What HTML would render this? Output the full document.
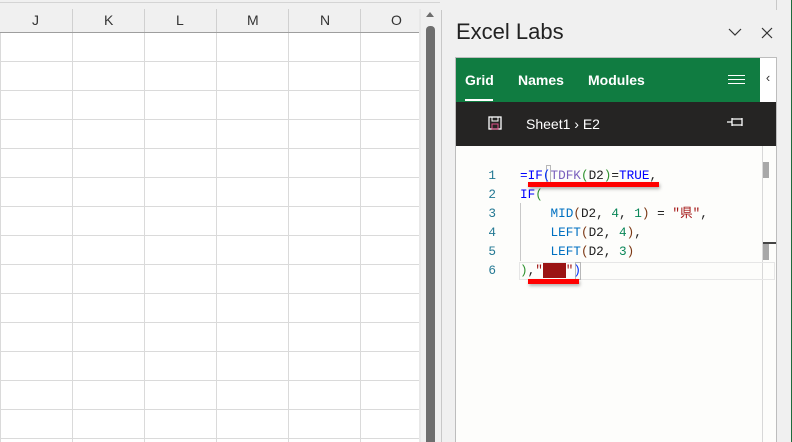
<!DOCTYPE html>
<html><head><style>
*{margin:0;padding:0;box-sizing:border-box}
body{width:792px;height:442px;overflow:hidden;background:#f0f0f0;position:relative;font-family:"Liberation Sans",sans-serif}
.a{position:absolute}
.mono{font-family:"Liberation Mono","Noto Sans CJK JP",monospace;font-size:12.7px;white-space:pre;line-height:19px}
</style></head><body>
<!-- grid -->
<div class="a" style="left:0;top:2px;width:440px;height:1px;background:#d4d4d4"></div>
<div class="a" style="left:0;top:9px;width:419px;height:24px;background:#f0f0f0;border-bottom:1px solid #9e9e9e"></div>
<div class="a" style="left:0;top:33px;width:419px;height:409px;background:#fff;
background-image:linear-gradient(#dadada 1px,transparent 1px),linear-gradient(90deg,#dadada 1px,transparent 1px);
background-size:72px 29px;background-position:0 28px,72px 0"></div>
<div class="a" style="left:0;top:9px;width:419px;height:23px;font-size:14px;color:#333">
<span class="a" style="left:32px;top:3px">J</span>
<span class="a" style="left:104px;top:3px">K</span>
<span class="a" style="left:176px;top:3px">L</span>
<span class="a" style="left:247px;top:3px">M</span>
<span class="a" style="left:320px;top:3px">N</span>
<span class="a" style="left:391px;top:3px">O</span>
<span class="a" style="left:72px;top:0;width:1px;height:23px;background:#d0d0d0"></span>
<span class="a" style="left:144px;top:0;width:1px;height:23px;background:#d0d0d0"></span>
<span class="a" style="left:216px;top:0;width:1px;height:23px;background:#d0d0d0"></span>
<span class="a" style="left:288px;top:0;width:1px;height:23px;background:#d0d0d0"></span>
<span class="a" style="left:360px;top:0;width:1px;height:23px;background:#d0d0d0"></span>
</div>
<div class="a" style="left:419px;top:9px;width:2px;height:433px;background:#e8e8e8"></div>
<div class="a" style="left:426px;top:12px;width:0;height:0;border-left:4px solid transparent;border-right:4px solid transparent;border-bottom:5px solid #6e6e6e"></div>
<div class="a" style="left:426px;top:26px;width:9px;height:416px;background:#6e6e6e;border-radius:4px 4px 0 0"></div>
<div class="a" style="left:441px;top:10px;width:1px;height:432px;background:#c8c8c8"></div>
<!-- pane -->
<div class="a" style="left:456px;top:19px;font-size:22px;color:#222">Excel Labs</div>
<svg class="a" style="left:728px;top:28px" width="14" height="9"><path d="M1 1 L7 7 L13 1" fill="none" stroke="#333" stroke-width="1.2"/></svg>
<svg class="a" style="left:761px;top:27px" width="12" height="12"><path d="M1 1 L11 11 M11 1 L1 11" stroke="#333" stroke-width="1.2"/></svg>
<div class="a" style="left:455px;top:57px;width:322px;height:385px;border:1px solid #bdbdbd;background:#efefef"></div>
<div class="a" style="left:456px;top:58px;width:304px;height:44px;background:#107c41"></div>
<div class="a" style="left:760px;top:58px;width:16px;height:44px;background:#fff;font-size:13px;color:#333;text-align:center;line-height:40px">&#8249;</div>
<div class="a" style="left:465px;top:72px;font-size:14px;font-weight:bold;color:#fff">Grid</div>
<div class="a" style="left:465px;top:99px;width:28px;height:2px;background:#fff"></div>
<div class="a" style="left:518px;top:72px;font-size:14px;font-weight:bold;color:#fff">Names</div>
<div class="a" style="left:588px;top:72px;font-size:14px;font-weight:bold;color:#fff">Modules</div>
<div class="a" style="left:728px;top:75px;width:17px;height:9px;border-top:1px solid #fff;border-bottom:1px solid #fff"></div>
<div class="a" style="left:728px;top:79px;width:17px;height:1px;background:#fff"></div>
<div class="a" style="left:456px;top:102px;width:320px;height:44px;background:#252423"></div>
<svg class="a" style="left:488px;top:116px" width="14" height="14"><rect x="1" y="1" width="12" height="12" fill="none" stroke="#fff" stroke-width="1.3"/><rect x="4" y="1" width="6" height="4" fill="none" stroke="#fff"/><rect x="4" y="8" width="6" height="5" fill="none" stroke="#e0508a"/></svg>
<div class="a" style="left:526px;top:116px;font-size:14px;color:#fff">Sheet1 &#8250; E2</div>
<svg class="a" style="left:727px;top:117px" width="18" height="10"><path d="M0 5 H5 M5 1 V9 M5 2 H15 V8 H5 M15 1 V9" fill="none" stroke="#fff" stroke-width="1.3"/></svg>
<!-- editor -->
<div class="a" style="left:456px;top:146px;width:306px;height:296px;background:#fdfdfb"></div>
<div class="a" style="left:762px;top:146px;width:1px;height:296px;background:#d8d8d8"></div>
<div class="a" style="left:763px;top:146px;width:13px;height:296px;background:#fdfdfb"></div>
<div class="a" style="left:763px;top:162px;width:6px;height:16px;background:#a8a8a8"></div>
<div class="a" style="left:763px;top:242px;width:13px;height:2px;background:#444"></div>
<div class="a" style="left:763px;top:244px;width:6px;height:16px;background:#a8a8a8"></div>
<div class="a" style="left:519px;top:262px;width:256px;height:18px;border:1px solid #e6e6e6"></div>
<div class="a" style="left:520px;top:203px;width:1px;height:58px;background:#c8c8c8"></div>
<div class="a" style="left:546px;top:165px;width:5px;height:18px;border:1px solid #b8b8b8"></div>
<div class="a" style="left:575px;top:262px;width:6px;height:18px;border:1px solid #b8b8b8"></div>
<div class="a mono" style="left:484px;top:166px;color:#237893;text-align:right;width:12px">1
2
3
4
5
6</div>
<div class="a mono" style="left:520px;top:166px;color:#222"><span style="color:#0000ff">=IF</span><span style="color:#0431fa">(</span><span style="color:#795fbd">TDFK</span><span style="color:#319331">(</span>D2<span style="color:#319331">)</span>=<span style="color:#0000ff">TRUE</span>,
<span style="color:#0000ff">IF</span><span style="color:#319331">(</span>
    <span style="color:#0070c1">MID</span><span style="color:#7b3814">(</span>D2, <span style="color:#098658">4</span>, <span style="color:#098658">1</span><span style="color:#7b3814">)</span> = <span style="color:#a31515">"県"</span>,
    <span style="color:#0070c1">LEFT</span><span style="color:#7b3814">(</span>D2, <span style="color:#098658">4</span><span style="color:#7b3814">)</span>,
    <span style="color:#0070c1">LEFT</span><span style="color:#7b3814">(</span>D2, <span style="color:#098658">3</span><span style="color:#7b3814">)</span>
<span style="color:#319331">)</span>,<span style="color:#a31515">"<span style="background:#9b1414;color:#9b1414">■■■</span>"</span><span style="color:#0431fa">)</span></div>
<div class="a" style="left:528px;top:182px;width:131px;height:5px;background:#f00;box-shadow:1px 2px 3px rgba(0,0,0,.3)"></div>
<div class="a" style="left:528px;top:279px;width:51px;height:5px;background:#f00;box-shadow:1px 2px 3px rgba(0,0,0,.3)"></div>
<div class="a" style="left:791px;top:0;width:1px;height:442px;background:#1e6b3c"></div>
<div class="a" style="left:776px;top:0;width:1px;height:10px;background:#c8c8c8"></div>
</body></html>
